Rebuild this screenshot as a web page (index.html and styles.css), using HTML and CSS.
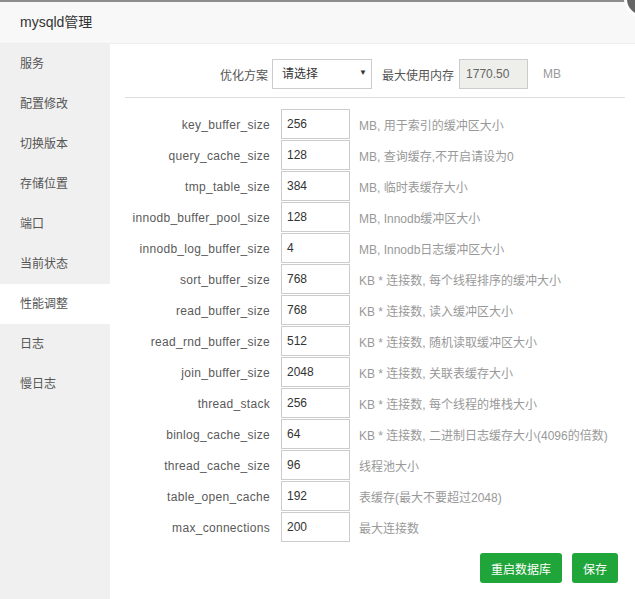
FILE: index.html
```html
<!DOCTYPE html>
<html lang="zh-CN">
<head>
<meta charset="utf-8">
<title>mysqld管理</title>
<link rel="stylesheet" href="styles.css">
</head>
<body>
<div class="layer">
  <div class="layer-title">mysqld管理</div>
  <span class="layer-close"></span>
  <div class="layer-body">
    <ul class="side-menu">
      <li>服务</li>
      <li>配置修改</li>
      <li>切换版本</li>
      <li>存储位置</li>
      <li>端口</li>
      <li>当前状态</li>
      <li class="active">性能调整</li>
      <li>日志</li>
      <li>慢日志</li>
    </ul>
    <div class="content">
      <div class="opt-row">
        <span class="opt-label">优化方案</span>
        <span class="select-wrap"><select class="opt-select"><option>请选择</option></select></span>
        <span class="opt-label mem-label">最大使用内存</span>
        <input class="mem-input" type="text" value="1770.50" disabled>
        <span class="unit">MB</span>
      </div>
      <div class="divider"></div>
      <div class="conf-list">
        <div class="conf-row"><span class="conf-name">key_buffer_size</span><input class="conf-input" value="256"><span class="conf-hint">MB, 用于索引的缓冲区大小</span></div>
        <div class="conf-row"><span class="conf-name">query_cache_size</span><input class="conf-input" value="128"><span class="conf-hint">MB, 查询缓存,不开启请设为0</span></div>
        <div class="conf-row"><span class="conf-name">tmp_table_size</span><input class="conf-input" value="384"><span class="conf-hint">MB, 临时表缓存大小</span></div>
        <div class="conf-row"><span class="conf-name">innodb_buffer_pool_size</span><input class="conf-input" value="128"><span class="conf-hint">MB, Innodb缓冲区大小</span></div>
        <div class="conf-row"><span class="conf-name">innodb_log_buffer_size</span><input class="conf-input" value="4"><span class="conf-hint">MB, Innodb日志缓冲区大小</span></div>
        <div class="conf-row"><span class="conf-name">sort_buffer_size</span><input class="conf-input" value="768"><span class="conf-hint">KB * 连接数, 每个线程排序的缓冲大小</span></div>
        <div class="conf-row"><span class="conf-name">read_buffer_size</span><input class="conf-input" value="768"><span class="conf-hint">KB * 连接数, 读入缓冲区大小</span></div>
        <div class="conf-row"><span class="conf-name">read_rnd_buffer_size</span><input class="conf-input" value="512"><span class="conf-hint">KB * 连接数, 随机读取缓冲区大小</span></div>
        <div class="conf-row"><span class="conf-name">join_buffer_size</span><input class="conf-input" value="2048"><span class="conf-hint">KB * 连接数, 关联表缓存大小</span></div>
        <div class="conf-row"><span class="conf-name">thread_stack</span><input class="conf-input" value="256"><span class="conf-hint">KB * 连接数, 每个线程的堆栈大小</span></div>
        <div class="conf-row"><span class="conf-name">binlog_cache_size</span><input class="conf-input" value="64"><span class="conf-hint">KB * 连接数, 二进制日志缓存大小(4096的倍数)</span></div>
        <div class="conf-row"><span class="conf-name">thread_cache_size</span><input class="conf-input" value="96"><span class="conf-hint">线程池大小</span></div>
        <div class="conf-row"><span class="conf-name">table_open_cache</span><input class="conf-input" value="192"><span class="conf-hint">表缓存(最大不要超过2048)</span></div>
        <div class="conf-row"><span class="conf-name">max_connections</span><input class="conf-input" value="200"><span class="conf-hint">最大连接数</span></div>
      </div>
      <div class="actions">
        <button class="btn">重启数据库</button>
        <button class="btn">保存</button>
      </div>
    </div>
  </div>
</div>
</body>
</html>
```
FILE: styles.css
```css
* { box-sizing: border-box; }
html, body { margin: 0; padding: 0; }
body {
  background: #8c8c8c;
  font-family: "Liberation Sans", "Noto Sans CJK SC", sans-serif;
  color: #555;
  overflow: hidden;
}
.layer {
  position: relative;
  margin-top: 2px;
  height: 597px;
  background: #fff;
}
.layer-title {
  height: 42px;
  line-height: 41px;
  padding-left: 20px;
  font-size: 14px;
  color: #333;
  background: #f8f8f8;
  border-bottom: 1px solid #eee;
}
.layer-close {
  position: absolute;
  left: 624px;
  top: -22px;
  width: 38px;
  height: 38px;
  border-radius: 50%;
  background: #666;
  border: 3px solid #fff;
}
.layer-body {
  display: flex;
  height: 555px;
}
.side-menu {
  list-style: none;
  margin: 0;
  padding: 0;
  width: 110px;
  flex: none;
  background: #f0f0f0;
}
.side-menu li {
  height: 40px;
  line-height: 41px;
  padding-left: 20px;
  font-size: 12px;
  color: #555;
}
.side-menu li.active { background: #fff; }
.content {
  flex: 1;
  padding: 15px 10px 0 15px;
}
.opt-row {
  display: flex;
  align-items: center;
  height: 30px;
  padding-left: 95px;
  font-size: 12px;
}
.opt-label { color: #555; margin-right: 4px; }
.select-wrap {
  position: relative;
  display: inline-block;
  width: 100px;
  height: 30px;
  margin-right: 10px;
}
.select-wrap::after {
  content: "▼";
  position: absolute;
  right: 5px;
  top: 9px;
  font-size: 8px;
  color: #333;
  pointer-events: none;
}
.opt-select {
  -webkit-appearance: none;
  appearance: none;
  width: 100%;
  height: 30px;
  border: 1px solid #ccc;
  border-radius: 0;
  background: #fff;
  padding: 0 0 0 9px;
  font-family: inherit;
  font-size: 12px;
  color: #333;
}
.mem-label { margin-right: 5px; }
.mem-input {
  width: 69px;
  height: 30px;
  border: 1px solid #ccc;
  background: #eeeeea;
  padding: 0 6px;
  font-family: inherit;
  font-size: 12px;
  color: #666;
}
.unit {
  margin-left: 15px;
  color: #999;
  font-size: 12px;
}
.divider {
  height: 1px;
  background: #ddd;
  margin: 8px 0 11px;
}
.conf-row {
  display: flex;
  align-items: center;
  height: 31px;
}
.conf-name {
  width: 145px;
  text-align: right;
  font-size: 12px;
  letter-spacing: 0.3px;
  color: #5a5a5a;
  margin-right: 11px;
}
.conf-input {
  width: 69px;
  height: 30px;
  border: 1px solid #ccc;
  padding: 0 5px;
  font-family: inherit;
  font-size: 12px;
  color: #333;
  margin-bottom: 1px;
}
.conf-hint {
  margin-left: 9px;
  font-size: 12px;
  color: #999;
  white-space: nowrap;
}
.actions {
  display: flex;
  justify-content: flex-end;
  gap: 10px;
  margin-top: 10px;
  padding-right: 7px;
}
.btn {
  height: 30px;
  padding: 0 11px;
  border: none;
  border-radius: 3px;
  background: #20a53a;
  color: #fff;
  font-family: inherit;
  font-size: 12px;
}
```
